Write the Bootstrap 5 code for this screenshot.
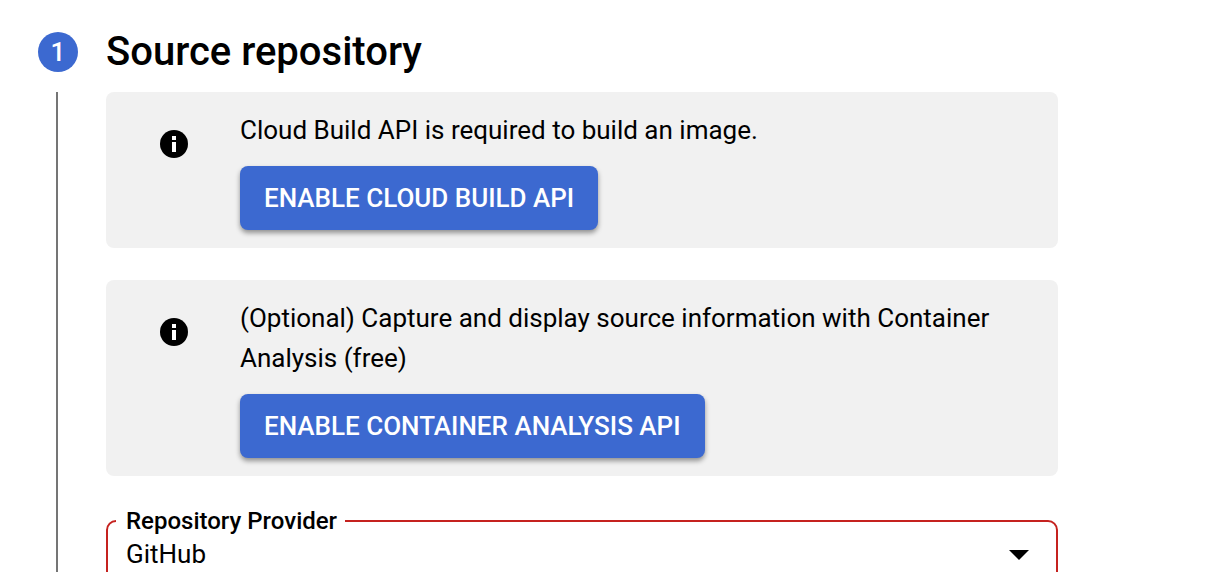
<!DOCTYPE html>
<html lang="en">
<head>
<meta charset="utf-8">
<meta name="viewport" content="width=device-width, initial-scale=1">
<title>Source repository</title>
<link href="https://cdn.jsdelivr.net/npm/bootstrap@5.3.0/dist/css/bootstrap.min.css" rel="stylesheet">
<style>
  body { font-family: Roboto, "Liberation Sans", sans-serif; font-size: 26px; line-height: 40px; color: #000; background: #fff; }
  .setup-step { padding: 28px 150px 0 38px; column-gap: 28px; min-height: 100vh; }
  .step-rail { width: 40px; row-gap: 20px; }
  .step-number { width: 40px; height: 40px; background: #3c69d0; color: #fff; font-weight: 500; margin-top: 4px; }
  .step-line { width: 2px; background: #757575; margin-left: 18px; }
  .step-title { font-size: 40px; line-height: 48px; font-weight: 500; margin-bottom: 16px; }
  .notice { background: #f1f1f1; border-radius: 8px; padding: 18px 54px; column-gap: 52px; margin-bottom: 32px; }
  .notice-icon { width: 28px; height: 28px; margin-top: 20px; }
  .notice p { margin-bottom: 16px; }
  .btn-enable { --bs-btn-bg: #3c69d0; --bs-btn-color: #fff; --bs-btn-hover-bg: #3159b8; --bs-btn-hover-color: #fff; --bs-btn-border-width: 0; --bs-btn-border-radius: 8px; --bs-btn-padding-x: 24px; --bs-btn-padding-y: 12px; --bs-btn-font-size: 26px; --bs-btn-font-weight: 500; --bs-btn-line-height: 40px; box-shadow: 0 3px 5px rgba(0,0,0,.4); }
  .provider { border: 2px solid #c5221f; border-radius: 10px; }
  .provider legend { float: none; width: auto; font-size: 24px; line-height: 26px; font-weight: 500; margin: 0 0 0 8px; padding: 0 8px 0 10px; }
  .provider select { appearance: none; background: transparent; border: 0; width: 100%; color: #000; padding: 0 18px 16px; line-height: 40px; }
  .caret { right: 27px; top: 16px; width: 20px; height: 10px; pointer-events: none; }
</style>
</head>
<body>
<main class="setup-step d-flex">
  <div class="step-rail d-flex flex-column align-items-start flex-shrink-0">
    <span class="step-number rounded-circle d-flex align-items-center justify-content-center flex-shrink-0">1</span>
    <span class="step-line flex-grow-1"></span>
  </div>
  <div class="flex-grow-1">
    <h1 class="step-title">Source repository</h1>
    <section class="notice d-flex">
      <svg class="notice-icon flex-shrink-0" viewBox="0 0 28 28" aria-hidden="true"><circle cx="14" cy="14" r="14"/><path fill="#fff" d="M12 6h4v4h-4zM12 12h4v10h-4z"/></svg>
      <div>
        <p>Cloud Build API is required to build an image.</p>
        <button type="button" class="btn btn-enable">ENABLE CLOUD BUILD API</button>
      </div>
    </section>
    <section class="notice d-flex">
      <svg class="notice-icon flex-shrink-0" viewBox="0 0 28 28" aria-hidden="true"><circle cx="14" cy="14" r="14"/><path fill="#fff" d="M12 6h4v4h-4zM12 12h4v10h-4z"/></svg>
      <div>
        <p>(Optional) Capture and display source information with Container Analysis (free)</p>
        <button type="button" class="btn btn-enable">ENABLE CONTAINER ANALYSIS API</button>
      </div>
    </section>
    <fieldset class="provider">
      <legend><label class="d-block" for="provider">Repository Provider</label></legend>
      <div class="position-relative">
        <select id="provider" class="d-block"><option>GitHub</option><option>Bitbucket</option></select>
        <svg class="caret position-absolute" viewBox="0 0 20 10" aria-hidden="true"><path d="M0 0h20L10 10z"/></svg>
      </div>
    </fieldset>
  </div>
</main>
<script src="https://cdn.jsdelivr.net/npm/bootstrap@5.3.0/dist/js/bootstrap.bundle.min.js"></script>
</body>
</html>
